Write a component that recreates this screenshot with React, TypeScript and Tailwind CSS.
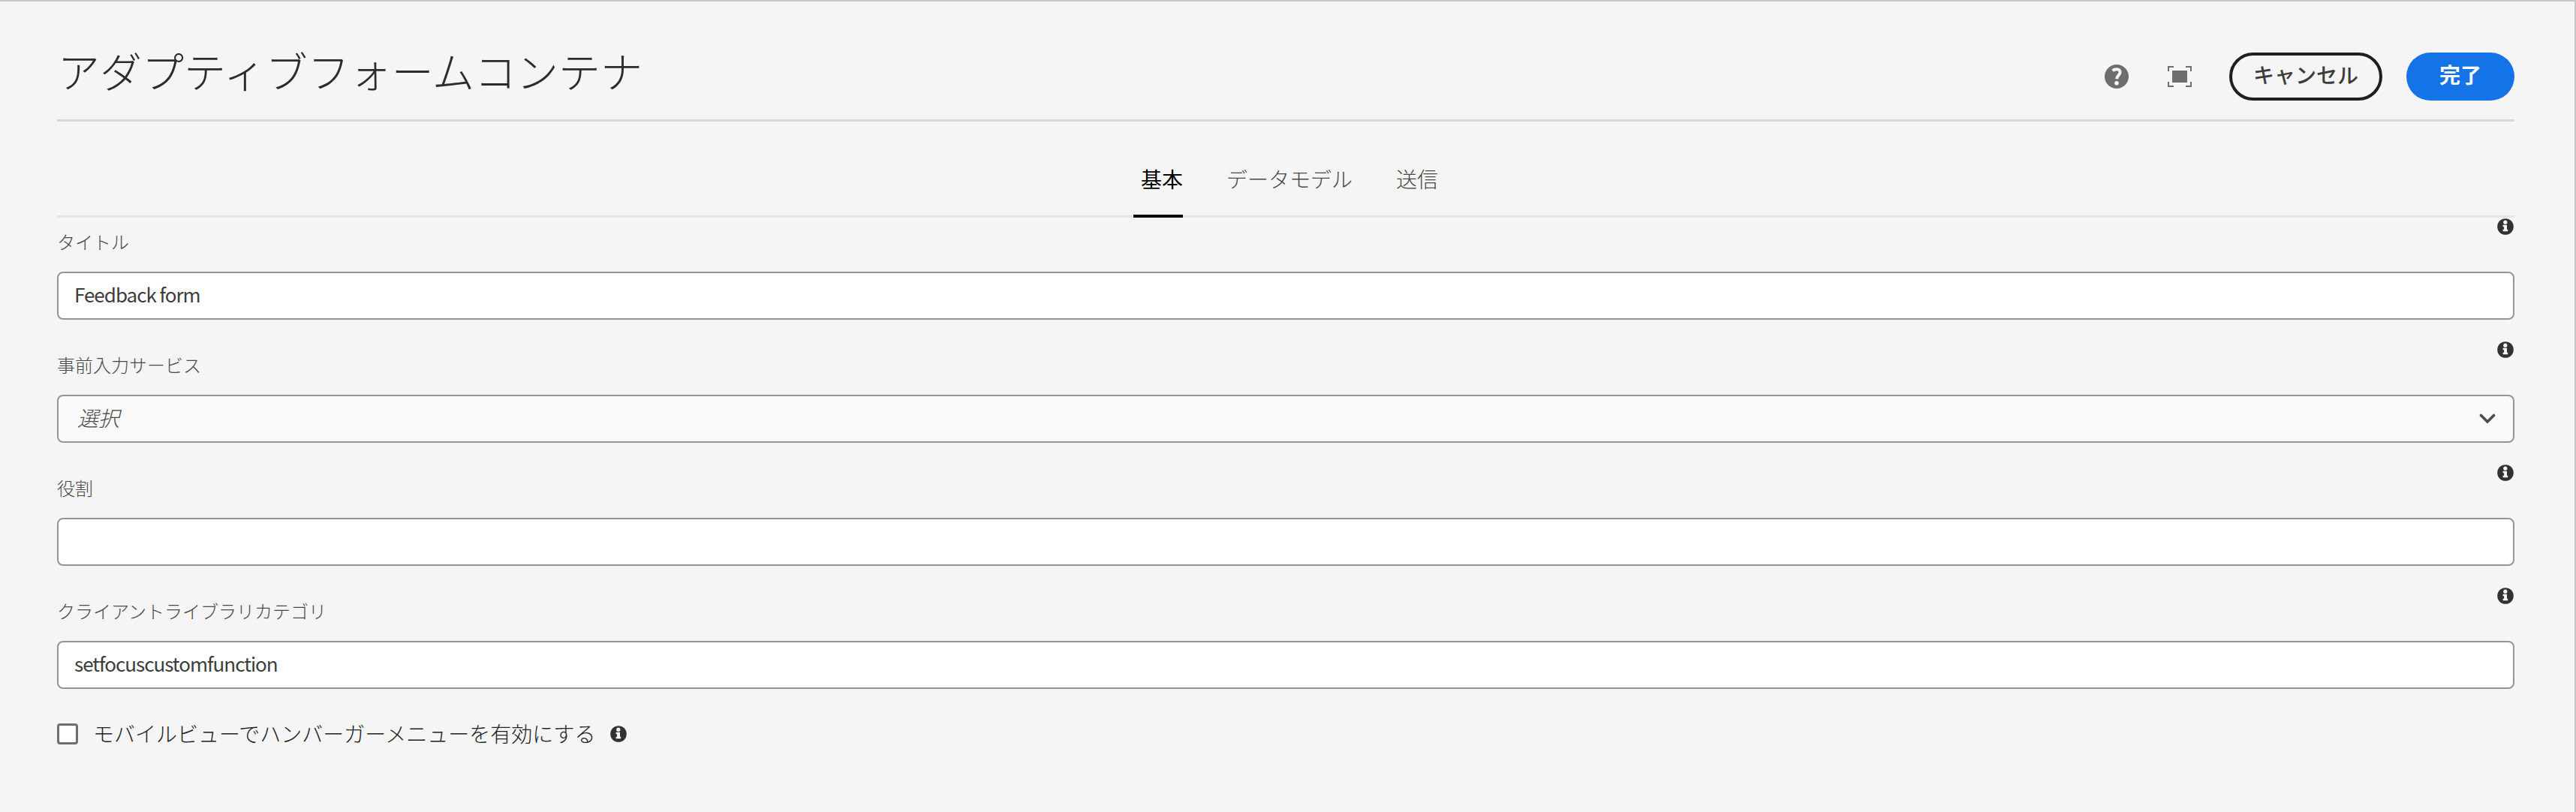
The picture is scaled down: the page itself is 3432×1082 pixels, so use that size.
const InfoIcon = () => (
  <svg className="block h-[22px] w-[22px] shrink-0" viewBox="0 0 22 22">
    <circle cx="11" cy="11" r="10.8" fill="#323232" />
    <circle cx="10.8" cy="5.2" r="2.6" fill="#f5f5f5" />
    <path d="M7.6 8.8h5.4v6h1.2v2.4H7.6v-2.4h1.5v-3.6H7.6z" fill="#f5f5f5" />
  </svg>
);

const HelpIcon = () => (
  <svg className="block h-8 w-8" viewBox="0 0 32 32">
    <circle cx="16" cy="16" r="16" fill="#6e6e6e" />
    <path
      d="M10.6 8.2C12.2 6.8 14 6.2 16 6.2c2.8 0 4.6 1.6 4.6 4 0 4-4.4 4.6-4.4 9"
      fill="none"
      stroke="#f5f5f5"
      strokeWidth="4"
    />
    <circle cx="16" cy="24.8" r="2.8" fill="#f5f5f5" />
  </svg>
);

const FullScreenIcon = () => (
  <svg className="block h-7 w-8" viewBox="0 0 32 28">
    <rect x="6" y="6" width="20" height="16" fill="#6e6e6e" />
    <path
      d="M1 7V1h7M24 1h7v6M31 21v6h-7M8 27H1v-6"
      fill="none"
      stroke="#6e6e6e"
      strokeWidth="2"
    />
  </svg>
);

type FieldProps = { label: string; value?: string; select?: boolean };

const Field = ({ label, value, select }: FieldProps) => (
  <div className="h-[164px]">
    <div className="flex h-[74px] items-start justify-between">
      <label className="pt-4 text-[24px] leading-9 font-light text-[#484848]">{label}</label>
      <div className="pt-[3px] pr-px">
        <InfoIcon />
      </div>
    </div>
    {select ? (
      <div className="flex h-16 items-center justify-between rounded-lg border-2 border-[#959595] bg-[#fafafa] pr-[23px] pl-[25px]">
        <span className="pb-1 text-[28px] leading-none font-light text-[#484848] italic">{value}</span>
        <svg className="block h-[14px] w-[22px]" viewBox="0 0 22 14">
          <path
            d="M2.5 2.5 11 11l8.5-8.5"
            fill="none"
            stroke="#4b4b4b"
            strokeWidth="3.6"
            strokeLinecap="round"
          />
        </svg>
      </div>
    ) : (
      <div className="flex h-16 items-center rounded-lg border-2 border-[#959595] bg-white pl-[21px]">
        <span className="pb-[5px] text-[26px] leading-none tracking-[-1px] text-[#3c3c3c]">{value}</span>
      </div>
    )}
  </div>
);

export default function App() {
  return (
    <div className="h-[1082px] w-[3432px] overflow-hidden border-t-2 border-r-2 border-[#c8c8c8] bg-[#f5f5f5] pr-20 pl-19 font-['Noto_Sans_CJK_JP',sans-serif]">
      <header className="flex h-[160px] items-start justify-between border-b-3 border-[#d8d8d8]">
        <h1 className="pt-[59px] pl-px text-[56px] leading-[64px] font-light text-[#2c2c2c]">
          アダプティブフォームコンテナ
        </h1>
        <div className="flex items-center pt-[68px]">
          <HelpIcon />
          <div className="ml-[52px]">
            <FullScreenIcon />
          </div>
          <button className="ml-[50px] flex h-16 w-[204px] items-center justify-center rounded-full border-4 border-[#1f1f1f] pb-1.5 text-[28px] font-medium text-[#3c3c3c]">
            キャンセル
          </button>
          <button className="ml-8 flex h-16 w-36 items-center justify-center rounded-full bg-[#1473e6] pb-1.5 text-[28px] font-bold text-white">
            完了
          </button>
        </div>
      </header>

      <nav className="flex h-[128px] items-end border-b-3 border-[#e6e6e6] pl-[1434px] text-[28px] leading-[40px] font-light text-[#484848]">
        <div className="-mb-[3px] h-[72px] w-[66px] border-b-4 border-black pl-[10px] font-normal whitespace-nowrap text-black">
          基本
        </div>
        <div className="-mb-[3px] ml-[58px] h-[72px]">データモデル</div>
        <div className="-mb-[3px] ml-[58px] h-[72px]">送信</div>
      </nav>

      <main className="-mt-0.5">
        <Field label="タイトル" value="Feedback form" />
        <Field label="事前入力サービス" value="選択" select />
        <Field label="役割" />
        <Field label="クライアントライブラリカテゴリ" value="setfocuscustomfunction" />
        <div className="flex h-[68px] items-center">
          <span className="h-7 w-7 rounded-[4px] border-[3px] border-[#6e6e6e] bg-white" />
          <span className="ml-5 pb-[3px] text-[28px] leading-none font-light text-[#222222]">
            モバイルビューでハンバーガーメニューを有効にする
          </span>
          <div className="ml-5">
            <InfoIcon />
          </div>
        </div>
      </main>
    </div>
  );
}
